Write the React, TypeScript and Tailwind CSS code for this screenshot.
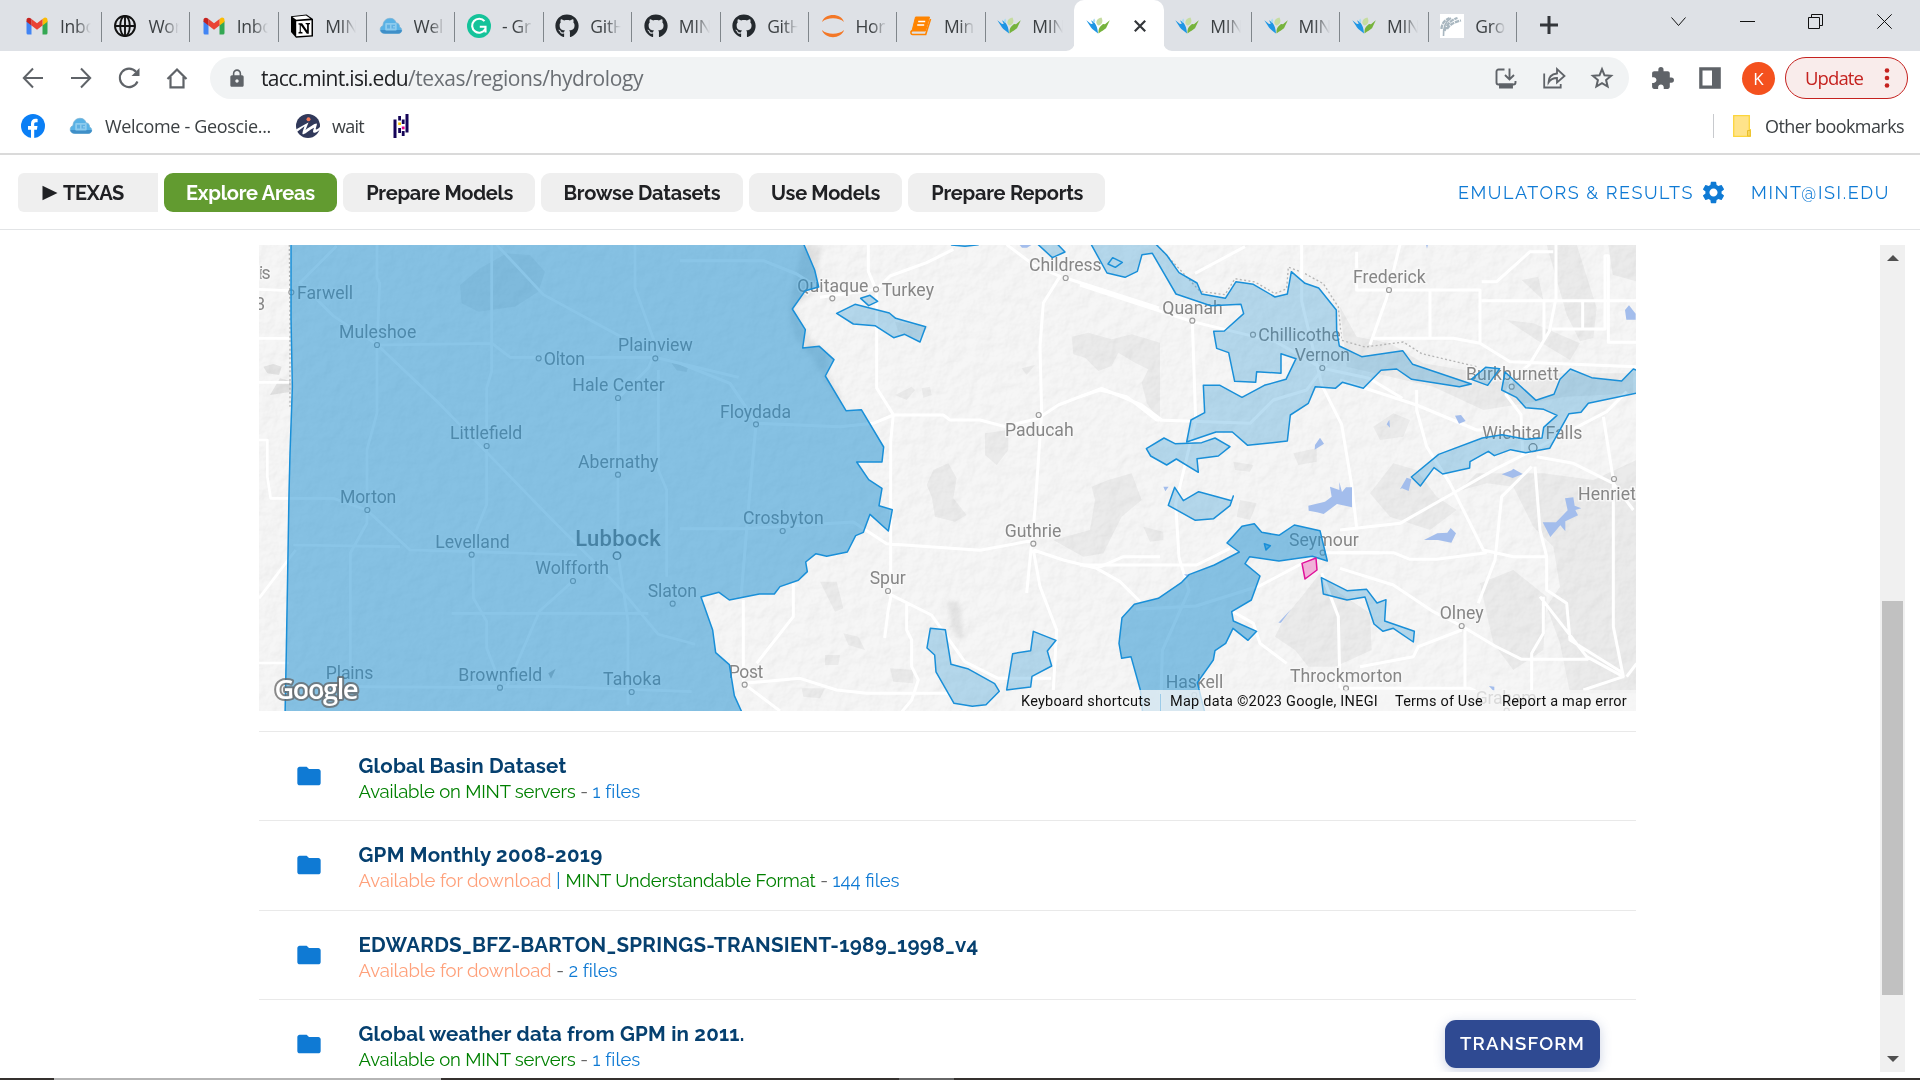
import { useLayoutEffect, useRef, useState } from "react";
import type { ReactNode } from "react";
import { FaGithub } from "react-icons/fa";
import { MdSettings, MdFolder, MdExtension, MdLock } from "react-icons/md";

/* Single line of text whose tracking is adjusted so that it fills a given width. */
function Fit({ w, className = "", children }: { w: number; className?: string; children: string }) {
  const ref = useRef<HTMLSpanElement>(null);
  const [ls, setLs] = useState(0);
  useLayoutEffect(() => {
    if (ref.current) setLs((w - ref.current.getBoundingClientRect().width) / children.length);
  }, []);
  return (
    <span ref={ref} className={`inline-block whitespace-pre ${className}`} style={{ letterSpacing: `${ls}px` }}>
      {children}
    </span>
  );
}

/* ---------- favicons ---------- */
const Gmail = () => (
  <svg viewBox="0 0 24 24" className="size-6">
    <path d="M1.5 20.5V7l5 3.5v10H3A1.5 1.5 0 0 1 1.500 19z" fill="#4285f4" />
    <path d="M17.500 20.500V10.500l5-3.500v12a1.500 1.500 0 0 1-1.500 1.500z" fill="#34a853" />
    <path d="M17.500 5v6.500l5-3.700V6c0-2.400-2.700-3-4-1.800z" fill="#fbbc04" />
    <path d="M6.500 11.500V5L12 9.200 17.500 5v6.500L12 15.700z" fill="#ea4335" />
    <path d="M1.500 6v1.800l5 3.700V5l-1-.8C4.200 3.200 1.500 3.600 1.500 6z" fill="#c5221f" />
  </svg>
);
const Globe = () => (
  <svg viewBox="0 0 24 24" className="size-6" fill="none" stroke="#111" strokeWidth="1.900">
    <circle cx="12" cy="12" r="10" />
    <ellipse cx="12" cy="12" rx="4.800" ry="10" />
    <path d="M2 12h20M12 2v20" />
  </svg>
);
const Notion = () => (
  <svg viewBox="0 0 24 24" className="size-6">
    <path d="M1 2.200 16.500.5 23 5v17.500L6 23.800 1 18z" fill="#000" />
    <path d="M2.500 3 16 1.600l4.300 3L6.200 5.700z" fill="#fff" />
    <path d="M6.200 7.200 21.500 6.200V21.200L6.200 22.200z" fill="#fff" />
    <path d="M8.500 9.300h3.600l5 7.200V10.500l-1.500-.4V9h4.400v1.100l-1.200.4v9.300h-2l-6-8.500v6.500l1.700.5v1.100H8.500v-1.100l1.200-.5v-7l-1.200-.4z" fill="#000" />
  </svg>
);
const Cloud = () => (
  <svg viewBox="0 0 24 24" className="size-6">
    <path d="M6 19.500C-.5 19.500.5 12 4 11.800 4 7 7.500 4.300 11 4.300s5.500 2 6 4.500c3 .3 3.800 2.700 3.500 4.200 3.500 1.500 2.500 6.500-1 6.500z" fill="#58b2e6" stroke="#7fb4d4" strokeWidth=".8" />
    <path d="M1.300 16c.8 2.500 2.400 3.500 5 3.500h13c2 0 3.500-1.300 3.600-3.500z" fill="#3f8fc8" />
    <rect x="6.200" y="9" width="11.500" height="7.500" rx="1" fill="#8ccbee" />
    <path d="M8 10.800h3v3.800H8zM12.500 10.800h3.500v1.200h-2v1.400h2v1.200h-3.500z" fill="#5fb0e2" />
  </svg>
);
const Grammarly = () => (
  <svg viewBox="0 0 24 24" className="size-6">
    <circle cx="12" cy="12" r="12" fill="#15c39a" />
    <path d="M17.500 7.200A7 7 0 1 0 18.300 15" fill="none" stroke="#fff" strokeWidth="2.100" />
    <path d="M12.800 12.700h5.700v5.800" fill="none" stroke="#fff" strokeWidth="2.100" />
  </svg>
);
const Git = () => <FaGithub className="size-6 text-[#24292e]" />;
const Jupyter = () => (
  <svg viewBox="0 0 24 24" className="size-6" fill="#f37726">
    <path d="M1 8C3.500-1.500 20.500-1.500 23 8 18 3 6 3 1 8z" />
    <path d="M1 16c2.500 9.500 19.500 9.500 22 0-5 5-17 5-22 0z" />
  </svg>
);
const Book = () => (
  <svg viewBox="0 0 24 24" className="size-6">
    <path d="M6.500 3h14L16.500 17H3z" fill="#ff8400" stroke="#ff8400" strokeWidth="1" strokeLinejoin="round" />
    <path d="M3 16.500c-2 1.500-1 4 .5 4h13.200L21.500 5" fill="none" stroke="#ff8400" strokeWidth="1.600" />
    <path d="M9.200 7.500h7M8.200 11h7" stroke="#fff" strokeWidth="1.500" />
  </svg>
);
const Mint = () => (
  <svg viewBox="0 0 24 24" className="size-6">
    <path d="M.3 6.200 5 10l1.800-.3L5 6.200l3 2c1.800 2.300 3.500 4.300 4 11.300C9 17 6.500 15.500 5 13.500z" fill="#1e96e4" />
    <path d="M23.800 6.200 19 10.200l-2-.3-2.200 2c-2 2-2.300 3.600-2.300 7.600 3.500-2.700 5-3 7.500-5.200z" fill="#76b33c" />
    <path d="M12.300 11.500C8.500 9 10.500 4.500 15.500 3.500c2 4 .5 7.500-3.200 8z" fill="#c6dca0" />
    <path d="M8.200 4.500c2 2.500.7 4-.4 4-1.200 0-1.400-1.700.4-4z" fill="#a8dcf4" />
  </svg>
);
const Gro = () => (
  <svg viewBox="0 0 24 24" className="size-6 bg-white" fill="none" stroke="#a9b7c0">
    <path d="M3.500 22C3 14 5 8 11 4" strokeWidth="1.600" />
    <path d="M1.500 15c0-5 3-9 8-11M4.500 17c2-6 6-11 13-13M7 15c2-4 7-7 14-8.500" strokeWidth="2.300" strokeDasharray="4.500 .8" />
  </svg>
);

type Tab = { icon: () => ReactNode; text?: string; active?: boolean; noSep?: boolean };
const tabs: Tab[] = [
  { icon: Gmail, text: "Inbo" },
  { icon: Globe, text: "Wor" },
  { icon: Gmail, text: "Inbo" },
  { icon: Notion, text: "MIN" },
  { icon: Cloud, text: "Wel" },
  { icon: Grammarly, text: "- Gr" },
  { icon: Git, text: "GitH" },
  { icon: Git, text: "MIN" },
  { icon: Git, text: "GitH" },
  { icon: Jupyter, text: "Hor" },
  { icon: Book, text: "Min" },
  { icon: Mint, text: "MIN", noSep: true },
  { icon: Mint, active: true },
  { icon: Mint, text: "MIN" },
  { icon: Mint, text: "MIN" },
  { icon: Mint, text: "MIN" },
  { icon: Gro, text: "Gro" },
];

function TabStrip() {
  return (
    <div className="flex h-[51px] shrink-0 bg-[#dee1e6] pl-[13.500px]">
      {tabs.map((t, i) => (
        <div
          key={i}
          className={
            t.active
              ? "relative flex w-[89.500px] items-center rounded-t-[10px] bg-white pl-[11.500px]"
              : "relative flex w-[88.400px] items-center pl-[11.500px]"
          }
        >
          {t.active && (
            <>
              <svg viewBox="0 0 9 9" className="absolute bottom-0 -left-[8px] size-[9px]"><path d="M9 0v9H0a9 9 0 0 0 9-9z" fill="#fff" /></svg>
              <svg viewBox="0 0 9 9" className="absolute -right-[8px] bottom-0 size-[9px]"><path d="M0 0v9h9a9 9 0 0 1-9-9z" fill="#fff" /></svg>
            </>
          )}
          <span className="mt-px shrink-0">{t.icon()}</span>
          {t.active ? (
            <svg viewBox="0 0 12 12" className="ml-6 size-3" stroke="#33363a" strokeWidth="2.200">
              <path d="M.8.8l10.400 10.400M11.200.8.8 11.200" />
            </svg>
          ) : (
            <span className="ml-[11px] w-[31px] overflow-hidden mask-r-from-50% text-[17.500px] leading-6 font-normal tracking-[-0.3px] whitespace-pre text-[#3c4043]">
              {t.text}
            </span>
          )}
          {!t.active && !t.noSep && <span className="absolute top-3 right-0 h-[30px] w-px bg-[#80868b]" />}
        </div>
      ))}
      <svg viewBox="0 0 20 20" className="mt-[15px] ml-[22px] size-5" stroke="#33363a" strokeWidth="3">
        <path d="M1 10h18M10 1v18" />
      </svg>
      <div className="ml-[112px] flex gap-[53.600px] pt-[14px]">
        <svg viewBox="0 0 15 15" className="size-[15px]" fill="none" stroke="#111"><path d="M.5 3.500l7 8 7-8" /></svg>
        <svg viewBox="0 0 15 15" className="size-[15px]" fill="none" stroke="#111"><path d="M0 7.500h15" /></svg>
        <svg viewBox="0 0 15 15" className="size-[15px]" fill="none" stroke="#111"><path d="M.5 3.500h11v11H.5zM3.500 3V.5h11v11H12" /></svg>
        <svg viewBox="0 0 15 15" className="size-[15px]" fill="none" stroke="#111"><path d="M.3.3l14.400 14.400M14.700.3.3 14.700" /></svg>
      </div>
    </div>
  );
}

function Toolbar() {
  return (
    <div className="flex h-[54px] shrink-0 items-center pl-[21px]">
      <div className="flex gap-6">
        <svg viewBox="0 0 24 24" className="size-6" fill="none" stroke="#5f6368" strokeWidth="2"><path d="M22 12H3M12 2.500 2.800 12l9.200 9.500" /></svg>
        <svg viewBox="0 0 24 24" className="size-6" fill="none" stroke="#5f6368" strokeWidth="2"><path d="M2 12h19M12 2.500l9.200 9.500-9.200 9.500" /></svg>
        <svg viewBox="0 0 24 24" className="size-6" fill="none" stroke="#5f6368" strokeWidth="2.100"><path d="M20.500 15.500A9.200 9.200 0 1 1 19 5.800" /><path d="M22.500 2v8h-8z" fill="#5f6368" stroke="none" /></svg>
        <svg viewBox="0 0 24 24" className="size-6" fill="none" stroke="#5f6368" strokeWidth="2.200"><path d="M2.500 13 12 3.500l9.500 9.500M5.500 11v10.400h13V11" /></svg>
      </div>
      <div className="ml-[21px] flex h-[42px] w-[1419px] items-center rounded-full bg-[#f1f3f4] pr-[15px] pl-[17px]">
        <MdLock className="h-[21px] w-5 text-[#5f6368]" />
        <div className="ml-[14px] flex grow text-[21px] leading-none">
          <Fit w={147} className="text-[#202124]">tacc.mint.isi.edu</Fit>
          <Fit w={235} className="text-[#6b6f74]">/texas/regions/hydrology</Fit>
        </div>
        <div className="flex gap-6 text-[#5f6368]">
          <svg viewBox="0 0 24 24" className="size-6" fill="none" stroke="currentColor" strokeWidth="1.900">
            <path d="M10.500 3.500H4.500a2 2 0 0 0-2 2v11a2 2 0 0 0 2 2h15a2 2 0 0 0 2-2V15M15.500 2.500v10.500M11 9l4.500 4.500L20 9" />
            <path d="M6 18.500h12v3H6z" fill="currentColor" />
          </svg>
          <svg viewBox="0 0 24 24" className="size-6" fill="none" stroke="currentColor" strokeWidth="1.800">
            <path d="M2.200 7.500v14h16.500v-3.500" />
            <path d="M6.500 16.500C6.500 11 10 8 15 7.500V3l7.500 7-7.500 6.500v-4.500c-4 0-6.500 1.300-8.500 4.500z" />
          </svg>
          <svg viewBox="0 0 24 24" className="size-6" fill="none" stroke="currentColor" strokeWidth="2">
            <path d="M12 3.200l2.500 6.100 6.600.5-5 4.300 1.500 6.400L12 17.100l-5.600 3.400 1.500-6.400-5-4.300 6.600-.5z" />
          </svg>
        </div>
      </div>
      <MdExtension className="ml-[21px] size-[25px] text-[#5f6368]" />
      <svg viewBox="0 0 24 24" className="ml-[23px] size-6"><path fillRule="evenodd" d="M1.200 1.200h21.600v21.600H1.200zM4.500 4.500v15h9.500v-15z" fill="#5f6368" /></svg>
      <div className="mt-px ml-[20px] flex size-[33px] items-center justify-center rounded-full bg-[#f4511e] text-[17px] text-white">K</div>
      <div className="ml-[10px] flex h-[42px] w-[123px] items-center rounded-full border-[1.500px] border-[#c5221f] bg-[#f9eceb] pl-[19px] text-[18.500px] leading-none text-[#c5221f]">
        <Fit w={58}>Update</Fit>
        <svg viewBox="0 0 6 20" className="ml-[21px] h-5 w-[6px]" fill="#c5221f">
          <circle cx="3" cy="2.500" r="2.300" /><circle cx="3" cy="10" r="2.300" /><circle cx="3" cy="17.500" r="2.300" />
        </svg>
      </div>
    </div>
  );
}

function Bookmarks() {
  return (
    <div className="flex h-[50px] shrink-0 items-center border-b-2 border-[#dadada] pb-[6px] pl-[21px] text-[18px] leading-none text-[#3c4043]">
      <svg viewBox="0 0 24 24" className="size-6"><circle cx="12" cy="12" r="12" fill="#0b7ff5" /><path d="M10 24v-8.200H7V12h3V9.600C10 6.300 12 4.800 14.600 4.800c1 0 2 .2 2 .2v3.200H15c-1.500 0-1.800.9-1.800 1.900V12h3.300l-.6 3.800h-2.700V24z" fill="#fff" /></svg>
      <span className="ml-6"><Cloud /></span>
      <Fit w={166} className="ml-3">Welcome - Geoscie...</Fit>
      <svg viewBox="0 0 24 24" className="ml-[25px] size-6">
        <circle cx="12" cy="12" r="12" fill="#31395a" />
        <path d="M0 15.500C4 13 8 11 12.500 8.500L9.500 16c4-3 9-6.500 11-6.500 1.500 0-1.500 5.500-.5 6 .8.300 2.500-1 4-2.500v2.500c-2 2-5 4-6.500 3-1.200-.9.500-4 .5-4.700-3.500 1.700-8 5.700-10.500 6.500-1.500.4-1.500-1 1-8L.8 18z" fill="#fff" />
        <circle cx="12.500" cy="5.300" r="2" fill="#f37a5a" />
      </svg>
      <Fit w={32} className="ml-3">wait</Fit>
      <svg viewBox="0 0 16 24" className="ml-[29px] h-6 w-4">
        <path d="M.5 5.500h3V24h-3zM12.500 0h3v18.500h-3zM5.200 2h2.800v4.500H5.200zM5.200 14h2.800v5H5.200zM8.800 5.500h2.800v4.500H8.800zM8.800 17h2.800v5H8.800z" fill="#150458" />
        <path d="M5.200 8.500h2.800v2.500H5.200z" fill="#ffca00" /><path d="M8.800 12.500h2.800v2.800H8.800z" fill="#e70488" />
      </svg>
      <span className="ml-auto h-6 w-px bg-[#c8cace]" />
      <svg viewBox="0 0 18 22" className="ml-[19px] h-[22px] w-[18px]"><path d="M.7.700h15.600v14h1v6.600H.7z" fill="#ffe38a" stroke="#fcd53c" strokeWidth="1.300" /><path d="M14.500 21v-5.500h2.800V21z" fill="#f8d85e" stroke="#e9be2c" /></svg>
      <Fit w={139} className="mr-4 ml-[14px]">Other bookmarks</Fit>
    </div>
  );
}

function NavBar() {
  const btn = "flex h-[39px] items-center rounded-[9px] bg-[#efefef] pt-px text-[#202124]";
  return (
    <div className="flex h-[75px] shrink-0 items-center border-b border-[#e2e4e6] pl-[18px] font-[Raleway,Lato,sans-serif] text-[20px] font-bold">
      <div className="flex h-[39px] w-[140px] items-center rounded-l-[6px] bg-[#efefef] pt-px pl-6 text-[#202124]">
        <svg viewBox="0 0 16 16" className="size-[16px]"><path d="M.5.800 15.500 8 .5 15.200z" fill="#202124" /></svg>
        <Fit w={61} className="ml-[5px]">TEXAS</Fit>
      </div>
      <div className="ml-[6px] flex gap-[6.200px]">
        <div className="flex h-[39px] w-[173px] items-center rounded-[9px] bg-[#629b30] pt-px pl-[22px] text-white"><Fit w={129}>Explore Areas</Fit></div>
        <div className={`${btn} w-[192px] pl-[23px]`}><Fit w={147}>Prepare Models</Fit></div>
        <div className={`${btn} w-[201.500px] pl-[22px]`}><Fit w={157}>Browse Datasets</Fit></div>
        <div className={`${btn} w-[153px] pl-[22px]`}><Fit w={109}>Use Models</Fit></div>
        <div className={`${btn} w-[197px] pl-[23px]`}><Fit w={152}>Prepare Reports</Fit></div>
      </div>
      <div className="ml-auto flex items-center pr-[30px] text-[18px] font-normal text-[#0f7ad4]">
        <Fit w={236}>EMULATORS &amp; RESULTS</Fit>
        <MdSettings className="ml-[6px] size-[27px]" />
        <Fit w={139} className="ml-6">MINT@ISI.EDU</Fit>
      </div>
    </div>
  );
}

/* ---------- map ---------- */
/* Each sheet holds shapes on a local grid of 3 units per pixel. */
type Label = [string, number, number, number, number?, number?];
const sheets: { x: number; labels: Label[] }[] = [
  {
    x: 250,
    labels: [
      ["is", 27, 62, 117], ["3", 16, 42, 210],
      ["Farwell", 141, 309, 176, 124, 157], ["Muleshoe", 267, 499, 294, 381, 315], ["Olton", 881, 1005, 375, 866, 355],
      ["Plainview", 1104, 1328, 334, 1216, 355], ["Hale Center", 967, 1244, 454, 1104, 474], ["Littlefield", 600, 817, 598, 710, 618],
      ["Abernathy", 984, 1225, 684, 1104, 704], ["Morton", 270, 439, 789, 352, 810], ["Levelland", 556, 779, 924, 665, 944],
      ["Wolfforth", 856, 1077, 1003, 969, 1023], ["Slaton", 1193, 1341, 1071, 1268, 1091], ["Plains", 227, 370, 1316, 297, 1336],
      ["Brownfield", 625, 877, 1322, 750, 1343], ["Tahoka", 1059, 1234, 1336, 1145, 1356],
    ],
  },
  {
    x: 680,
    labels: [
      ["Floydada", 120, 333, 533, 228, 553], ["Crosbyton", 189, 431, 852, 308, 873], ["Quitaque", 352, 565, 155, 457, 175],
      ["Turkey", 605, 762, 168, 588, 148], ["Childress", 1047, 1265, 94, 1157, 114], ["Paducah", 975, 1181, 587, 1076, 525],
      ["Guthrie", 974, 1144, 891, 1060, 911], ["Spur", 569, 677, 1033, 624, 1053], ["Post", 146, 250, 1314, 194, 1334],
    ],
  },
  {
    x: 1080,
    labels: [
      ["Quanah", 247, 428, 222, 337, 242], ["Chillicothe", 535, 782, 303, 519, 284], ["Vernon", 644, 810, 364, 727, 384],
      ["Seymour", 627, 836, 918, 728, 938], ["Haskell", 257, 430, 1345, 343, 1365], ["Throckmorton", 630, 967, 1325, 798, 1345],
    ],
  },
  {
    x: 1340,
    labels: [
      ["Frederick", 39, 257, 129, 147, 150], ["Burkburnett", 378, 656, 420, 515, 440], ["Wichita Falls", 427, 727, 598],
      ["Henrietta", 714, 935, 779, 822, 717], ["Olney", 299, 431, 1137, 365, 1158], ["Graham", 407, 590, 1392, 500, 1412],
    ],
  },
];

const at = (x: number) => `translate(${x} 240) scale(.33333)`;

function MapView() {
  return (
    <div className="relative h-[466px] w-[1377px] overflow-hidden">
      <svg viewBox="259 245 1377 466" className="h-[466px] w-[1377px]">
        <defs>
          <filter id="relief" x="0" y="0" width="100%" height="100%">
            <feTurbulence type="fractalNoise" baseFrequency=".07" numOctaves="5" seed="8" />
            <feDiffuseLighting surfaceScale="1.100" lightingColor="#fff" result="l"><feDistantLight azimuth="225" elevation="62" /></feDiffuseLighting>
            <feColorMatrix type="matrix" values=".9 0 0 0 .17 0 .9 0 0 .17 0 0 .9 0 .17 0 0 0 1 0" />
          </filter>
          <filter id="soft"><feGaussianBlur stdDeviation="8" /></filter>
        </defs>
        <rect x="259" y="245" width="1377" height="466" fill="#f6f6f6" />
        {/* vegetation patches */}
        <g fill="#ebebeb">
          <g transform={at(250)}>
            <path d="M630 135l60-50 80-45 70 5 45 50-20 60-70 45-110 15-50-25z" fill="#e9e9e9" />
            <path d="M40 380l30-8 25 8-8 25-35-5zM60 465l30-50 40 10-5 30z" fill="#e2e2e2" />
            <path d="M1265 370l50 8-5 18-30-5z" fill="#e2e2e2" />
            <path d="M895 1300l22-14-14 30z" fill="#bbb" />
          </g>
          <g transform={at(680)}>
            <path d="M1175 290l50-12 70 20 60-15 85 25v240l-40-60-15-60 20-40-40-20-50-30-20 40-40 15-40-40-35-10z" />
            <path d="M1285 720l70-20 30 80-60 50-55 110-60 10-90-50 110-30 15-90-10-40zM645 465l50-25 10 10-25 30zM725 445l25-5 5 25-25 8zM760 690l45-20 25 45-10 60 40 50-35 20-60-15-10-60-15-35zM915 580l70-10 0 60-35 45-35-30zM1025 385l40-10-25 30z" />
            <path d="M420 1025l50 0 20 80-25 10zM490 1180l45 10 20 40-50-15zM435 1245l45 0-5 30-40 0zM630 1285l70 5 0 40-60-5zM365 1345l70 0-15 30-50-5zM645 245l100 15-30 40-60-25z" />
          </g>
          <g transform={at(1080)}>
            <path d="M460 665l60 10-10 20-45-5zM640 640l70-15 0 40-55 10zM190 860l60 15 0 25-40 5zM480 780l50 10-20 50-40-10zM720 1000l60 60 90 60 5 110-110 50-80 0-40-50-60-40 30-60 50-60z" />
          </g>
          <g transform={at(1340)}>
            <path d="M620 14h90l60 190-10 90-40 10-40-80zM805 14h83v110l-70-20zM500 240l80 10 140 60-30 50-100-60zM545 120l50-10 15 70zM0 200l50 90 100 20 100 60 180 30h450v60l-200 10-250 40-150-70-260-60zM90 760l70-90 70 20 60 80 60 40-80 60-120-40zM100 560l60-40 50 20-20 50-70 10zM330 760l110-30 80 10 60 120 60 60 20 120-40 60 40 110 30 150h200V660l-130 60-150-20-200 0-60 60zM420 1030l100-40 100 80-10 160-90 60-60-80z" />
          </g>
        </g>
        <g transform={at(680)} fill="#9a9a9a" opacity=".2" filter="url(#soft)">
          <path d="M370 12h50l-10 140-70 50 45 90 60 50 0 60 60 110-50-60-60-100-50-60-20-90zM800 1080l40 10 10 110-30-20z" />
        </g>
        <rect x="259" y="245" width="1377" height="466" filter="url(#relief)" style={{ mixBlendMode: "multiply" }} opacity=".5" />
        {/* state border */}
        <g fill="none" stroke="#b5b5b5" strokeWidth="4" strokeDasharray="6 7">
          <path transform={at(250)} d="M118 14L120 240 120 500" />
          <path transform={at(1080)} d="M230 14l70 75 60 65 75 10 30-48 60 10 60 35 35-15 5-65 50 20 55 30 45 70 10 100 70 20 115-15 55 35 170 40" />
        </g>
        {/* roads */}
        <g fill="none" stroke="#fff" strokeWidth="9" strokeLinejoin="round">
          <g transform={at(250)} strokeWidth="8">
            <path d="M27 148l90 4M27 1269h90M260 18l-110 110 100 100 130 85 190 180 330 340 80 80 85 85 60 65 100 120 110 30M381 14v100l8 15-8 190v200l-30 110v220l-50 90v340M381 315l345-5 55 42h435l250 60M725 14v380l-15 50v350l-40 100v180l40 70v80l50 130M1155 14v130l65 180-25 60-90 90v230M1104 704v240l30 200v250M1225 390v300l25 60v260M120 775h130l100 35 130 120 190 5 310 10M130 915l320 5M605 1120h590M969 1023l-100 90-100 230M665 1340h260l400 15M300 1340l450 3M27 295h90M27 427h90M27 600h25v110l10 65h60M27 1075l110-145M740 14l140 150 240 130" />
          </g>
          <g transform={at(680)}>
            <path d="M565 14v80l25 60v290l50 80-8 80v470l-8 40-10 80M420 172l170-24 40-40 110-40 80-40M980 14l80 60 80 35-50 80-10 130 5 200-20 290-25 250M1157 114l280 90M580 550l60-25h150l20 15h90l75 20 100-25 60-40 130-50 120 50 60 45M0 866h200l320-20 100 65 280 20 160-30M1060 930l90 30 100 25 80-35h110M1060 930l20 110 50 130-10 180M1250 985l70 40 60 60M680 1085v85l15 30 0 80 20 40-20 60-50 60M624 1060l130 65 100 140 100 50h160M190 1330l170-15 110 35 90 10h250M190 1080v250l110 83M0 62h250l100 40 80 50M0 370l150 60 80 120 250 10 100-10M228 553l-20 220-25 300M340 1030v100l-110 140" />
          </g>
          <g transform={at(1080)}>
            <path d="M0 135l337 110 250 60 140 80 140 30 100 60M337 242l10 300-60 250 10 160 30 100-80 180-5 180M0 470l60-20 80 20 90 70 280 10 70-70 100-30 60-80M345 100l150-80M665 14v170l60 250 60 120 30 180 15 130M0 975h350l100-50M728 938l170 0M728 938l-190 100-190 60-180 10M725 1000l50 130 5 215M450 1110l70 40 20 60 80 60" />
          </g>
          <g transform={at(1340)}>
            <path d="M180 14l-40 160-50 140M50 35v115h370v160M270 150v140M100 295h240l80 15 90 55 380 15M425 125h45l100-90h70M648 14v160l-20 100-60 100-50 40-20 50 45 60 5 120M425 182h463M612 182v120M728 182v85M635 267h160v-220h10v260h83M0 420l230 75 180 75h160M230 450v60l30 110 70 110 100 200 90 20h100M0 870l180-20 150-85 140-80 100-50 230-120 60-60M590 650l110 20 120 60 60 80M790 530l30 190v440l30 150-110-60-140-180M585 680l15 190 20 80v100l60 40 10 110 160 100M610 1070v110l-35 60v110l-50 60M575 680l-90 90-20 190-50 130M0 985l160 50 120 80 85 43 100 60 80 40h200M365 1170l-130 50-15 30-160 30M375 1170v170M0 1345h390l60 30M860 1310l30-40M730 1350l120-40M0 938h160l50 20h80l150-20" />
          </g>
        </g>
        {/* lakes */}
        <g fill="#a3bdec">
          <path transform={at(680)} d="M1018 14h38l-15 9h-15z" />
          <path transform={at(1080)} d="M705 615l15-22 12 18-28 18zM685 797l50-12 20-15-5-30 28 10v-24l8 30 12-14 18 0v60l-45-10-40 30-20-5-25-5zM595 1148l38-40-30 40zM250 740l16 0-10 14zM312 1003l18 0-8 8z" />
          <path transform={at(1340)} d="M855 210l12-14 20 25v18h-28zM345 527l18-2 14 18-20 8zM140 553l8-14 2 24zM180 748l20-35 14 5-8 35-20-8zM485 703l30-12 5-5 28 16-30 12zM252 900l40-20 30-2 10-14 16 16-14 28-40-8zM608 847h40l35-36-8-36 25-3 4 25 20 8-18 5 8 16-38 18v30l-15-18-30 35zM447 1338l16 2v16zM258 14h6l-3 12z" />
        </g>
        {/* place names */}
        {sheets.map((s) => (
          <g key={s.x} transform={at(s.x)}>
            {s.labels.map(([t, x0, x1, y, dx, dy]) => (
              <g key={t}>
                {dx !== undefined && <circle cx={dx} cy={dy} r="7.500" fill="#f6f6f6" stroke="#9b9b9b" strokeWidth="3.500" />}
                <text x={x0} y={y} textLength={x1 - x0} className="fill-[#868686] font-[Roboto,sans-serif] text-[53px] [paint-order:stroke]" stroke="#f8f8f8" strokeWidth="9" strokeOpacity=".85">
                  {t}
                </text>
              </g>
            ))}
          </g>
        ))}
        <g transform={at(250)}>
          <circle cx="1101" cy="947" r="11" fill="#f6f6f6" stroke="#7d7d7d" strokeWidth="4.500" />
          <text x="976" y="918" textLength="256" className="fill-[#777] font-[Roboto,sans-serif] text-[66px] font-medium">Lubbock</text>
        </g>
        <circle cx="1533" cy="447.700" r="4" fill="#f6f6f6" stroke="#858585" strokeWidth="1.300" />

        {/* data regions */}
        <g stroke="#198fd8" strokeWidth="4.500" strokeLinejoin="round">
          <g fill="#198ed0" fillOpacity=".51">
            <path transform={at(680)} d="M-1167 5V235L-1163 440-1165 500-1170 640-1173 760-1177 1000-1181 1230-1185 1430H190L184 1413 163 1367 148 1274 107 1238 98 1170 63 1071 117 1057 148 1080 238 1062H283L300 1040 355 1021 382 995 377 966 408 941 440 949 502 936 527 887 550 877 570 823 625 873 637 809 597 797 606 745 566 719 530 666H606L611 621 544 509 498 512 436 408 462 359 418 319 368 324 376 269 337 207 376 152 416 141 404 90 368 5z" />
            <path transform={at(1080)} d="M188 1420L181 1350 153 1250 125 1255 117 1210 126 1133 163 1093 235 1075 305 1027 327 1004 403 975 478 936 441 909 486 859 523 851 545 877 597 886 643 855 720 872 742 963 697 949 597 963 509 950 495 971 540 1008 514 1080 455 1115 460 1143 530 1174 504 1201 459 1165 437 1210 405 1232 400 1260 352 1328 375 1420z" />
            <path transform={at(1080)} d="M553 911l18 6-13 13z" />
          </g>
          <g fill="#198ed0" fillOpacity=".3">
            <path transform={at(1080)} d="M220 5L260 45 297 98 351 129 365 162 436 175 468 125 520 133 585 171 622 162 634 95 675 130 716 144 769 210 770 270 778 318 845 350 968 332 998 373 1174 432 1138 440 995 418 950 387 903 391 850 445 787 427 766 445 706 440 685 490 631 525 622 603 503 616 457 576H408L320 606 333 540 374 518 370 436H420L486 472 553 436 618 418 648 356 603 341V400L530 395 527 427 464 424 446 338 410 325 401 274 433 273 491 221 483 193 392 197 288 162 217 40 186 44 172 94 135 112 81 99 29 5z" />
            <path transform={at(1080)} d="M84 72L98 53 127 67 106 82z" fillOpacity="0" />
            <path transform={at(1080)} d="M199 626L252 594 285 611 365 608 405 594 450 620 415 648 351 656 355 697 289 657 260 675 212 648z" />
            <path transform={at(1080)} d="M265 796L284 742 310 782 356 755 455 782 460 768 450 797 401 836 346 841z" />
            <path transform={at(1080)} d="M724 1013L801 1052 860 1048 891 1089 918 1079 914 1143 1003 1174 1000 1206 940 1165 909 1174 882 1152 855 1071 801 1080 730 1062z" />
            <path transform={at(680)} d="M470 220L525 193 628 219 647 235 737 260 720 306 674 283 641 293 585 257 520 252zM542 175L570 166 593 184 566 197zM751 1165L796 1169 813 1273 863 1286 944 1331 958 1354 918 1394 877 1399 822 1390 768 1296 764 1245 741 1224zM1060 1174L1128 1201 1102 1233 1115 1278 1056 1309 1052 1341 980 1350 998 1241 1052 1232zM805 5L815 15 855 19 895 14 900 5zM1065 5L1117 53 1155 36 1125 5z" />
            <path transform={at(1340)} d="M394 418L437 382 479 386 443 436zM495 396L588 481 642 463 660 418 691 387 755 413 845 423 880 387 900 395V457L745 490 723 517 687 521 629 625 557 638 512 629 463 647 445 634 390 665 389 684 308 702 282 683 241 738 214 711 296 643 427 594 486 584 557 598 606 594 611 562 651 526 611 508 557 503 529 472 485 450z" />
          </g>
          <path transform={at(1080)} d="M666 970L708 954 711 990 675 1017z" fill="#ec4cae" fillOpacity=".4" stroke="#e0129a" />
        </g>
        <text x="274.500" y="699" textLength="84" className="fill-white font-['Open_Sans',sans-serif] text-[27.500px] font-semibold [paint-order:stroke]" stroke="#666" strokeOpacity=".75" strokeWidth="4" strokeLinejoin="round">
          Google
        </text>
      </svg>
      <div className="absolute right-0 bottom-0 flex h-[21px] items-center bg-[#f5f5f5]/75 pt-[3px] pr-[9px] pl-[5px] font-[Roboto,sans-serif] text-[14.500px] leading-none text-[#111]">
        <Fit w={130}>Keyboard shortcuts</Fit>
        <span className="ml-[9px] h-[17px] w-px bg-[#9ccbe8]" />
        <Fit w={208} className="ml-[9px]">Map data ©2023 Google, INEGI</Fit>
        <Fit w={88} className="ml-[17px]">Terms of Use</Fit>
        <Fit w={125} className="ml-[19px]">Report a map error</Fit>
      </div>
    </div>
  );
}

type Row = { title: string; tw: number; parts: [string, number, "g" | "o" | "b" | "s"][]; action?: boolean };
const rows: Row[] = [
  { title: "Global Basin Dataset", tw: 208, parts: [["Available on MINT servers", 217, "g"], [" - ", 17, "s"], ["1 files", 47, "b"]] },
  { title: "GPM Monthly 2008-2019", tw: 244, parts: [["Available for download", 193, "o"], [" | ", 14, "b"], ["MINT Understandable Format", 250, "g"], [" - ", 17, "s"], ["144 files", 67, "b"]] },
  { title: "EDWARDS_BFZ-BARTON_SPRINGS-TRANSIENT-1989_1998_v4", tw: 620, parts: [["Available for download", 193, "o"], [" - ", 17, "s"], ["2 files", 48, "b"]] },
  { title: "Global weather data from GPM in 2011.", tw: 386, parts: [["Available on MINT servers", 217, "g"], [" - ", 17, "s"], ["1 files", 47, "b"]], action: true },
];
const tone = { g: "text-[#008000]", o: "text-[#ffa07a]", b: "text-[#0f7ad4]", s: "text-[#666]" };

function DatasetList() {
  return (
    <div className="mt-5 font-[Raleway,Lato,sans-serif]">
      {rows.map((r) => (
        <div key={r.title} className="flex h-[89.400px] border-t border-[#e9e9e9]">
          <MdFolder className="mt-[30px] ml-[36px] size-7 shrink-0 text-[#0f7ad4]" />
          <div className="ml-[35.500px] grow pt-[21px]">
            <div className="h-[26px] text-[20.500px] leading-[26px] font-bold text-[#06406f]"><Fit w={r.tw}>{r.title}</Fit></div>
            <div className="flex h-6 text-[18.500px] leading-[25px]">
              {r.parts.map(([t, w, c], i) => (
                <Fit key={i} w={w} className={tone[c]}>{t}</Fit>
              ))}
            </div>
          </div>
          {r.action && (
            <div className="mt-[20px] mr-[36px] flex h-12 w-[155px] items-center rounded-[11px] bg-[#2f4a92] pl-[15px] text-[18.500px] font-semibold text-white shadow-[0_3px_12px_rgba(47,74,146,0.25)]">
              <Fit w={125}>TRANSFORM</Fit>
            </div>
          )}
        </div>
      ))}
    </div>
  );
}

export default function App() {
  return (
    <div className="flex h-[1080px] w-[1920px] flex-col overflow-hidden bg-white font-['Open_Sans','Noto_Sans',sans-serif]">
      <TabStrip />
      <Toolbar />
      <Bookmarks />
      <NavBar />
      <div className="mt-[15px] flex h-[827px] shrink-0">
        <div className="ml-[259px] w-[1377px] overflow-x-visible overflow-y-clip">
          <MapView />
          <DatasetList />
        </div>
        <div className="ml-[244px] flex w-[25px] flex-col items-center bg-[#f0f0f0]">
          <svg viewBox="0 0 12 6" className="mt-[10px] h-[6px] w-3"><path d="M0 6l6-6 6 6z" fill="#505050" /></svg>
          <div className="mt-[340px] h-[394px] w-[21px] bg-[#c1c1c1]" />
          <svg viewBox="0 0 12 6" className="mt-[61px] h-[6px] w-3"><path d="M0 0l6 6 6-6z" fill="#505050" /></svg>
        </div>
      </div>
      <div className="mt-auto flex h-[2px] shrink-0 bg-[#35312f]">
        <span className="w-[54px] bg-[#35312f]" />
        <span className="w-[387px] bg-[#b5b5b5]" />
        <span className="ml-[458px] w-[55px] bg-[#666]" />
      </div>
    </div>
  );
}
